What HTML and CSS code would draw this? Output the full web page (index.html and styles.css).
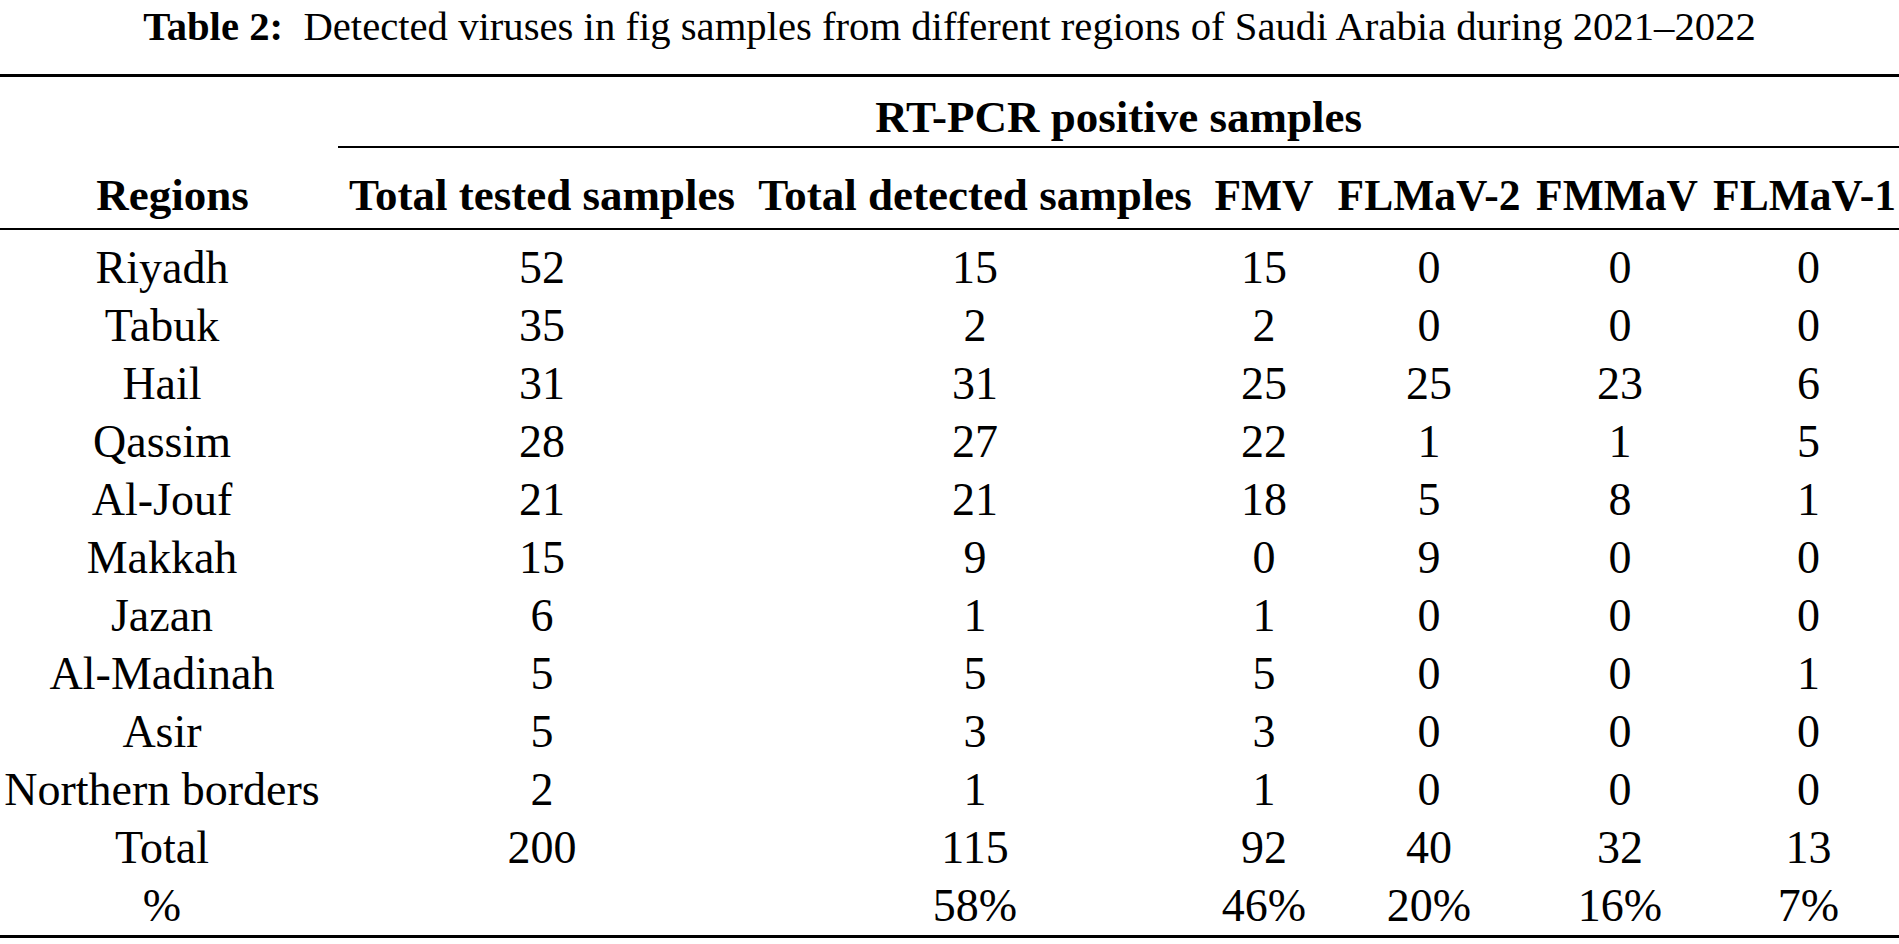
FILE: index.html
```html
<!DOCTYPE html>
<html lang="en">
<head>
<meta charset="utf-8">
<title>Table 2</title>
<link rel="stylesheet" href="styles.css">
</head>
<body>
<div class="page">
  <p class="caption"><b class="label">Table 2:</b>&nbsp; Detected viruses in fig samples from different regions of Saudi Arabia during 2021–2022</p>
  <table class="data">
    <colgroup>
      <col class="c1"><col class="c2"><col class="c3"><col class="c4"><col class="c5"><col class="c6"><col class="c7">
    </colgroup>
    <thead>
      <tr class="group">
        <th></th>
        <th colspan="6" class="span">RT-PCR positive samples</th>
      </tr>
      <tr class="heads">
        <th class="reg">Regions</th>
        <th>Total tested samples</th>
        <th>Total detected samples</th>
        <th class="virus">FMV</th>
        <th class="virus">FLMaV-2</th>
        <th class="virus mm">FMMaV</th>
        <th class="virus last">FLMaV-1</th>
      </tr>
    </thead>
    <tbody>
      <tr><td class="reg">Riyadh</td><td>52</td><td>15</td><td>15</td><td>0</td><td>0</td><td class="v7">0</td></tr>
      <tr><td class="reg">Tabuk</td><td>35</td><td>2</td><td>2</td><td>0</td><td>0</td><td class="v7">0</td></tr>
      <tr><td class="reg">Hail</td><td>31</td><td>31</td><td>25</td><td>25</td><td>23</td><td class="v7">6</td></tr>
      <tr><td class="reg">Qassim</td><td>28</td><td>27</td><td>22</td><td>1</td><td>1</td><td class="v7">5</td></tr>
      <tr><td class="reg">Al-Jouf</td><td>21</td><td>21</td><td>18</td><td>5</td><td>8</td><td class="v7">1</td></tr>
      <tr><td class="reg">Makkah</td><td>15</td><td>9</td><td>0</td><td>9</td><td>0</td><td class="v7">0</td></tr>
      <tr><td class="reg">Jazan</td><td>6</td><td>1</td><td>1</td><td>0</td><td>0</td><td class="v7">0</td></tr>
      <tr><td class="reg">Al-Madinah</td><td>5</td><td>5</td><td>5</td><td>0</td><td>0</td><td class="v7">1</td></tr>
      <tr><td class="reg">Asir</td><td>5</td><td>3</td><td>3</td><td>0</td><td>0</td><td class="v7">0</td></tr>
      <tr><td class="reg">Northern borders</td><td>2</td><td>1</td><td>1</td><td>0</td><td>0</td><td class="v7">0</td></tr>
      <tr><td class="reg">Total</td><td>200</td><td>115</td><td>92</td><td>40</td><td>32</td><td class="v7">13</td></tr>
      <tr><td class="reg">%</td><td></td><td>58%</td><td>46%</td><td>20%</td><td>16%</td><td class="v7">7%</td></tr>
    </tbody>
  </table>
</div>
</body>
</html>
```
FILE: styles.css
```css
html, body {
  margin: 0;
  padding: 0;
  background: #ffffff;
}

body {
  font-family: "Liberation Serif", "Times New Roman", serif;
  color: #000000;
}

.page {
  width: 1899px;
  height: 944px;
  overflow: hidden;
}

.caption {
  margin: 0 0 20px 0;
  height: 54px;
  line-height: 54px;
  font-size: 40.7px;
  text-align: center;
  white-space: nowrap;
}

.caption .label {
  font-weight: bold;
}

.data {
  width: 1899px;
  table-layout: fixed;
  border-collapse: collapse;
  font-size: 46px;
  border-top: 3px solid #000;
  border-bottom: 3px solid #000;
}

.c1 { width: 338px; }
.c2 { width: 408px; }
.c3 { width: 458px; }
.c4 { width: 120px; }
.c5 { width: 210px; }
.c6 { width: 172px; }
.c7 { width: 193px; }

.data th,
.data td {
  padding: 0;
  text-align: center;
  white-space: nowrap;
  font-weight: normal;
}

.data thead th {
  font-weight: bold;
  font-size: 45px;
  line-height: 54px;
}

.data thead th.virus {
  font-size: 43.5px;
}

.data thead th.mm {
  padding-right: 6px;
}

.data thead th.last {
  padding-left: 4px;
}

.group th {
  padding-top: 13px;
  padding-bottom: 2px;
}

.group .span {
  border-bottom: 2px solid #000;
}

.heads th {
  padding-top: 20px;
  padding-bottom: 6px;
  border-bottom: 2px solid #000;
}

.heads th.reg {
  padding-left: 7px;
}

.data td {
  line-height: 58px;
}

.data tbody tr:first-child td {
  padding-top: 9px;
}

.data td.reg {
  padding-right: 14px;
}

.data td.v7 {
  padding-left: 12px;
}
```
